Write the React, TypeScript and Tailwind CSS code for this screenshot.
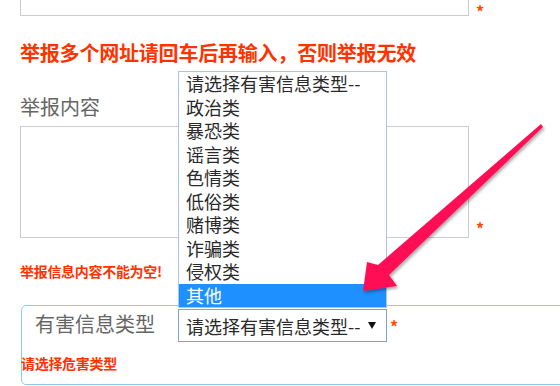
import React from "react";

const options = [
  "请选择有害信息类型--",
  "政治类",
  "暴恐类",
  "谣言类",
  "色情类",
  "低俗类",
  "赌博类",
  "诈骗类",
  "侵权类",
  "其他",
];

export default function App() {
  return (
    <div
      className="relative w-[560px] h-[386px] overflow-hidden bg-white pl-[20px]"
      style={{ fontFamily: '"Noto Sans CJK SC", "Noto Sans", sans-serif' }}
    >
      {/* top input */}
      <div className="flex items-start -mt-[18px]">
        <div className="w-[449px] h-[34px] border border-[#cccccc] bg-white" />
        <span className="ml-[7px] mt-[21px] text-[16px] leading-[16px] font-bold text-[#ff4a00]">*</span>
      </div>

      <div className="mt-[20px] text-[20px] leading-[28px] font-bold text-[#ff3300] tracking-[-0.2px]">
        举报多个网址请回车后再输入，否则举报无效
      </div>

      <div className="mt-[28px] text-[20px] leading-[23px] text-[#666666]">举报内容</div>

      <div className="mt-[8px] flex items-end">
        <div className="w-[449px] h-[112px] border border-[#cccccc] bg-white" />
        <span className="ml-[7px] mb-[2px] text-[16px] leading-[16px] font-bold text-[#ff4a00]">*</span>
      </div>

      <div className="mt-[23px] text-[14px] leading-[20px] font-bold text-[#ff3300] tracking-[-0.3px]">
        举报信息内容不能为空!
      </div>

      {/* fieldset box */}
      <div className="mt-[24px] ml-px w-[600px] h-[80px] border border-[#8ccbee] rounded-[5px] pt-[3px]">
        <div className="flex items-start">
          <div className="w-[156px] pl-[13px] pt-[1px] text-[20px] leading-[28px] text-[#666666]">
            有害信息类型
          </div>
          <div className="relative">
            {/* open dropdown list */}
            <div className="absolute left-0 bottom-full mb-[1px] w-[209px] border border-[#a9c6ea] bg-white">
              {options.map((o, i) => (
                <div
                  key={o}
                  className={
                    i === options.length - 1
                      ? "h-[23.5px] pl-[7px] text-[18px] leading-[23.5px] bg-[#1e90ff] text-white"
                      : "h-[23.5px] pl-[7px] text-[18px] leading-[23.5px] text-[#2a2a2a]"
                  }
                >
                  {o}
                </div>
              ))}
            </div>
            <div className="w-[209px] h-[33px] border border-[#7ea3d6] bg-white flex items-center pl-[7px] pr-[10px]">
              <span className="text-[18px] leading-[24px] text-[#2a2a2a]">请选择有害信息类型--</span>
              <svg className="ml-auto" width="8" height="7" viewBox="0 0 8 7">
                <polygon points="0,0 8,0 4,7" fill="#111111" />
              </svg>
            </div>
          </div>
          <span className="ml-[3px] mt-[9px] text-[16px] leading-[16px] font-bold text-[#ff4a00]">*</span>
        </div>
        <div className="mt-[11px] -ml-px text-[14px] leading-[20px] font-bold text-[#ff3300] tracking-[-0.3px]">
          请选择危害类型
        </div>
      </div>

      {/* annotation arrow */}
      <svg
        className="absolute left-0 top-0 pointer-events-none"
        width="560"
        height="386"
        viewBox="0 0 560 386"
      >
        <defs>
          <filter id="sh" x="-20%" y="-20%" width="140%" height="140%">
            <feDropShadow dx="1.5" dy="2" stdDeviation="1.5" floodColor="#000000" floodOpacity="0.35" />
          </filter>
        </defs>
        <polygon
          filter="url(#sh)"
          fill="#ff0f55"
          points="541,124 543,127 389,275 397,286 363,291 367,262 378,265"
        />
      </svg>
    </div>
  );
}
